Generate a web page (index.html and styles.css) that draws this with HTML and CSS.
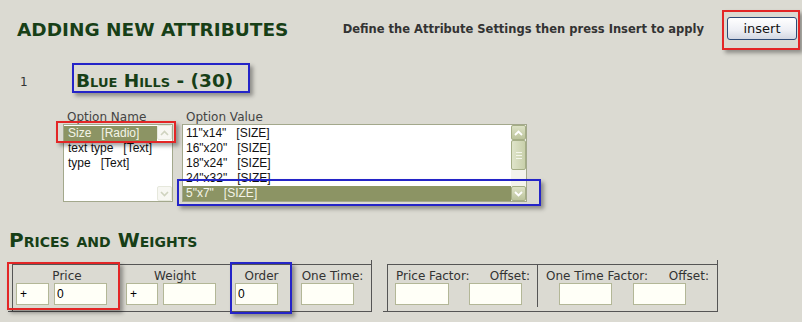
FILE: index.html
```html
<!DOCTYPE html>
<html>
<head>
    <title>Adding New Attributes</title>
    <meta charset="UTF-8">
    <link rel="stylesheet" href="styles.css">
</head>
<body>
    <div class="page">
        <div class="header">
            <h1 class="title">ADDING NEW ATTRIBUTES</h1>
            <div class="header-right">
                <span class="hint">Define the Attribute Settings then press Insert to apply</span>
                <button class="insert-button">insert</button>
            </div>
        </div>

        <div class="product-row">
            <span class="row-number">1</span>
            <span class="product-name">Blue Hills - (30)</span>
        </div>

        <!-- Option lists -->
        <div class="options">
            <div class="option-col name-col">
                <div class="option-label">Option Name</div>
                <div class="listbox">
                    <div class="list-items">
                        <div class="list-item selected">Size   [Radio]</div>
                        <div class="list-item">text type   [Text]</div>
                        <div class="list-item">type   [Text]</div>
                    </div>
                    <div class="scrollbar disabled">
                        <div class="scroll-button">
                            <svg width="9" height="6" viewBox="0 0 9 6"><path d="M1 5 L4.5 1.5 L8 5" fill="none" stroke-width="1.6"/></svg>
                        </div>
                        <div class="scroll-track"></div>
                        <div class="scroll-button">
                            <svg width="9" height="6" viewBox="0 0 9 6"><path d="M1 1 L4.5 4.5 L8 1" fill="none" stroke-width="1.6"/></svg>
                        </div>
                    </div>
                </div>
            </div>
            <div class="option-col value-col">
                <div class="option-label">Option Value</div>
                <div class="listbox">
                    <div class="list-items">
                        <div class="list-item">11"x14"   [SIZE]</div>
                        <div class="list-item">16"x20"   [SIZE]</div>
                        <div class="list-item">18"x24"   [SIZE]</div>
                        <div class="list-item cut">24"x32"   [SIZE]</div>
                        <div class="list-item selected">5"x7"   [SIZE]</div>
                    </div>
                    <div class="scrollbar">
                        <div class="scroll-button">
                            <svg width="9" height="6" viewBox="0 0 9 6"><path d="M1 5 L4.5 1.5 L8 5" fill="none" stroke-width="1.8"/></svg>
                        </div>
                        <div class="scroll-thumb">
                            <span class="grip"></span>
                            <span class="grip"></span>
                            <span class="grip"></span>
                        </div>
                        <div class="scroll-track"></div>
                        <div class="scroll-button">
                            <svg width="9" height="6" viewBox="0 0 9 6"><path d="M1 1 L4.5 4.5 L8 1" fill="none" stroke-width="1.8"/></svg>
                        </div>
                    </div>
                </div>
            </div>
        </div>

        <h2 class="section-title">Prices and Weights</h2>

        <div class="groups">
            <div class="group group-main">
                <div class="cell cell-price">
                    <div class="cell-label">Price</div>
                    <div class="cell-inputs">
                        <input class="field field-prefix" type="text" value="+">
                        <input class="field field-value" type="text" value="0">
                    </div>
                </div>
                <div class="cell cell-weight">
                    <div class="cell-label">Weight</div>
                    <div class="cell-inputs">
                        <input class="field field-prefix-small" type="text" value="+">
                        <input class="field field-value" type="text" value="">
                    </div>
                </div>
                <div class="cell cell-order">
                    <div class="cell-label">Order</div>
                    <div class="cell-inputs">
                        <input class="field field-order" type="text" value="0">
                    </div>
                </div>
                <div class="cell cell-onetime">
                    <div class="cell-label">One Time:</div>
                    <div class="cell-inputs">
                        <input class="field field-value" type="text" value="">
                    </div>
                </div>
            </div>

            <div class="group group-factors">
                <div class="factor factor-price">
                    <div class="factor-labels">
                        <span class="factor-name">Price Factor:</span>
                        <span>Offset:</span>
                    </div>
                    <div class="factor-inputs">
                        <input class="field field-factor" type="text" value="">
                        <input class="field field-value" type="text" value="">
                    </div>
                </div>
                <div class="factor factor-onetime">
                    <div class="factor-labels">
                        <span class="factor-name">One Time Factor:</span>
                        <span>Offset:</span>
                    </div>
                    <div class="factor-inputs">
                        <input class="field field-value" type="text" value="">
                        <input class="field field-value" type="text" value="">
                    </div>
                </div>
            </div>
        </div>

        <!-- Highlight boxes drawn over the form -->
        <div class="mark mark-red mark-insert"></div>
        <div class="mark mark-blue mark-product"></div>
        <div class="mark mark-red mark-size"></div>
        <div class="mark mark-blue mark-value"></div>
        <div class="mark mark-red mark-price"></div>
        <div class="mark mark-blue mark-order"></div>
    </div>
</body>
</html>
```

FILE: styles.css
```css
body, html {
    margin: 0;
    padding: 0;
    box-sizing: border-box;
}

*, *:before, *:after {
    box-sizing: inherit;
}

body {
    background-color: #dbdad2;
    font-family: "DejaVu Sans", Verdana, sans-serif;
    color: #333;
}

.page {
    position: relative;
    width: 802px;
    height: 322px;
    overflow: hidden;
}

/* Header */
.header {
    display: flex;
    align-items: center;
    justify-content: space-between;
    height: 58px;
    padding: 0 5px 0 17px;
}

.title {
    margin: 0;
    font-size: 18.5px;
    font-weight: bold;
    color: #173f17;
}

.header-right {
    display: flex;
    align-items: center;
    gap: 23px;
}

.hint {
    font-size: 11.5px;
    font-weight: bold;
    color: #333;
}

.insert-button {
    width: 70px;
    height: 23px;
    margin-bottom: 2px;
    padding: 0;
    border: 1px solid #2c4a78;
    border-radius: 3px;
    background: linear-gradient(#ffffff, #eceef4 60%, #d3d7e2);
    font-family: "DejaVu Sans", Verdana, sans-serif;
    font-size: 13px;
    color: #111;
    cursor: pointer;
}

/* Product row */
.product-row {
    display: flex;
    align-items: center;
    height: 44px;
    padding-left: 20px;
}

.row-number {
    width: 56px;
    font-size: 12px;
    padding-top: 3px;
}

.product-name {
    font-size: 18.5px;
    font-weight: bold;
    font-variant: small-caps;
    color: #173f17;
}

/* Option lists */
.options {
    display: flex;
    gap: 9px;
    margin-top: 8px;
    padding-left: 63px;
}

.name-col {
    width: 110px;
}

.value-col {
    width: 345px;
}

.option-label {
    height: 14px;
    line-height: 14px;
    padding-left: 4px;
    font-size: 12px;
    color: #444;
}

.listbox {
    display: flex;
    height: 78px;
    border: 1px solid #a3a88c;
    background-color: #fff;
}

.list-items {
    flex: 1;
    padding-top: 1px;
    overflow: hidden;
}

.list-item {
    height: 15px;
    line-height: 15px;
    padding-left: 4px;
    font-family: "Liberation Sans", Arial, sans-serif;
    font-size: 12px;
    color: #111;
    white-space: pre;
}

.value-col .list-item {
    padding-left: 3px;
}

.list-item.cut {
    height: 15px;
    overflow: hidden;
}

.list-item.selected {
    background-color: #8c9464;
    color: #f4f4e8;
}

.scrollbar {
    display: flex;
    flex-direction: column;
    width: 15px;
    background-color: #f4f4ec;
}

.scroll-button {
    display: flex;
    align-items: center;
    justify-content: center;
    height: 15px;
    border: 1px solid #a5ae86;
    border-radius: 2px;
    background: linear-gradient(#dde2c6, #bcc49c);
}

.scroll-button svg path {
    stroke: #fff;
}

.scroll-thumb {
    display: flex;
    flex-direction: column;
    align-items: center;
    justify-content: center;
    gap: 2px;
    height: 30px;
    border: 1px solid #a5ae86;
    border-radius: 2px;
    background: linear-gradient(90deg, #dfe4ca, #c9d0ab);
}

.grip {
    width: 6px;
    height: 1px;
    background-color: #f4f6ea;
}

.scroll-track {
    flex: 1;
}

.scrollbar.disabled {
    background-color: #fff;
}

.scrollbar.disabled .scroll-button {
    border-color: #e6e8dc;
    background: #f7f7f2;
}

.scrollbar.disabled .scroll-button svg path {
    stroke: #cfd3bf;
}

/* Prices and weights */
.section-title {
    margin: 26px 0 0;
    padding-left: 9px;
    font-size: 20px;
    line-height: 24px;
    font-weight: bold;
    font-variant: small-caps;
    color: #173f17;
}

.groups {
    display: flex;
    gap: 15px;
    margin-top: 12px;
    padding-left: 12px;
}

.group {
    position: relative;
    display: flex;
    height: 48px;
    border: 1px solid #555;
    padding-top: 4px;
}

.group:after {
    content: "";
    position: absolute;
    right: -1px;
    top: -5px;
    height: 5px;
    border-right: 1px solid #555;
}

.group:before {
    content: "";
    position: absolute;
    left: -5px;
    bottom: -1px;
    width: 5px;
    border-bottom: 1px solid #555;
}

.group-main {
    width: 360px;
}

.group-factors {
    width: 331px;
}

.cell-label,
.factor-labels {
    height: 14px;
    line-height: 14px;
    font-size: 12px;
    color: #333;
    white-space: nowrap;
}

.cell-label {
    text-align: center;
}

.cell-inputs,
.factor-inputs {
    display: flex;
    gap: 5px;
}

.cell-price {
    width: 108px;
}

.cell-price .cell-inputs {
    padding-left: 3px;
}

.cell-weight {
    width: 108px;
}

.cell-weight .cell-inputs {
    padding-left: 5px;
}

.cell-order {
    width: 65px;
}

.cell-order .cell-inputs {
    padding-left: 6px;
}

.cell-onetime {
    width: 77px;
}

.cell-onetime .cell-inputs {
    padding-left: 7px;
}

.field {
    height: 22px;
    padding: 0 3px;
    border: 1px solid #b3b797;
    background-color: #fffff7;
    font-family: "Liberation Sans", Arial, sans-serif;
    font-size: 12px;
    color: #000;
    outline: none;
}

.field-prefix {
    width: 33px;
}

.field-prefix-small {
    width: 32px;
}

.field-value {
    width: 53px;
    padding-left: 2px;
}

.field-order {
    width: 43px;
    padding-left: 2px;
}

.field-factor {
    width: 54px;
}

.factor {
    height: 100%;
}

.factor-price {
    width: 149px;
}

.factor-price .factor-labels {
    padding-left: 8px;
}

.factor-price .factor-name {
    display: inline-block;
    width: 90px;
}

.factor-price .factor-inputs {
    gap: 20px;
    padding-left: 7px;
}

.factor-onetime {
    flex: 1;
    margin-top: -4px;
    padding-top: 4px;
    border-left: 1px solid #555;
}

.factor-onetime .factor-labels {
    padding-left: 8px;
}

.factor-onetime .factor-name {
    display: inline-block;
    width: 119px;
}

.factor-onetime .factor-inputs {
    gap: 21px;
    padding-left: 21px;
}

/* Highlight boxes */
.mark {
    position: absolute;
    border: 2px solid;
    box-shadow: 3px 3px 4px rgba(0, 0, 0, 0.35);
}

.mark-red {
    border-color: #e32626;
}

.mark-blue {
    border-color: #2424c8;
}

.mark-insert {
    left: 722px;
    top: 10px;
    width: 78px;
    height: 40px;
}

.mark-product {
    left: 72px;
    top: 63px;
    width: 178px;
    height: 30px;
}

.mark-size {
    left: 56px;
    top: 121px;
    width: 120px;
    height: 22px;
}

.mark-value {
    left: 177px;
    top: 179px;
    width: 364px;
    height: 27px;
}

.mark-price {
    left: 7px;
    top: 262px;
    width: 113px;
    height: 48px;
}

.mark-order {
    left: 230px;
    top: 262px;
    width: 62px;
    height: 52px;
}
```
